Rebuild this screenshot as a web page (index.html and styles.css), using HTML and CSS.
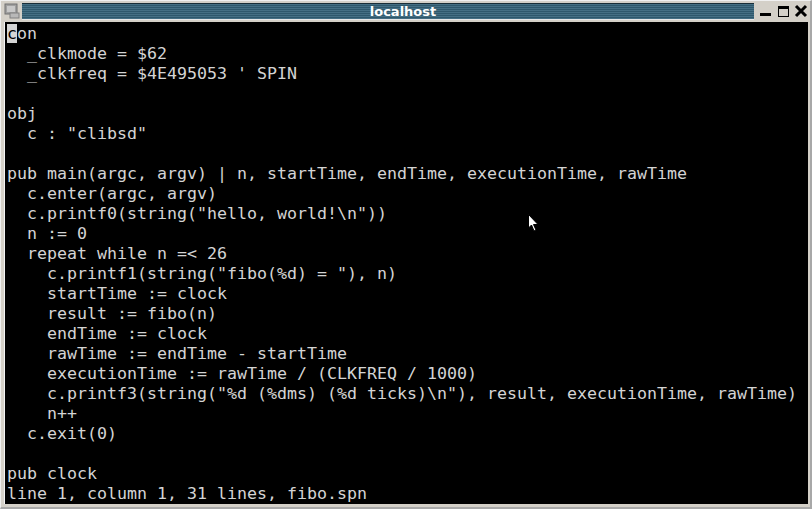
FILE: index.html
```html
<!DOCTYPE html>
<html>
<head>
<meta charset="utf-8">
<link rel="stylesheet" href="styles.css">
</head>
<body>
<div class="window">
  <div class="titlerow">
    <svg class="appicon" width="16" height="16" viewBox="0 0 16 16">
      <rect x="1" y="1" width="12" height="10" fill="#a0a0a0" stroke="#707070"/>
      <rect x="3" y="3" width="8" height="6" fill="#c8c8c8"/>
      <rect x="6" y="10" width="9" height="5" fill="#b8b8b8" stroke="#808080"/>
    </svg>
    <div class="titlebar"><span class="title">localhost</span></div>
    <div class="buttons">
      <svg width="14" height="14" viewBox="0 0 14 14"><rect x="2" y="9" width="11" height="3" fill="#000"/></svg>
      <svg width="14" height="14" viewBox="0 0 14 14"><rect x="2.5" y="2.5" width="10" height="10" fill="none" stroke="#000"/><rect x="2" y="2" width="11" height="3" fill="#000"/></svg>
      <svg width="14" height="14" viewBox="0 0 14 14"><path d="M2 2 L12 12 M12 2 L2 12" stroke="#000" stroke-width="3"/></svg>
    </div>
  </div>
  <div class="term">
<pre class="code"><span class="cursor">c</span>on
  _clkmode = $62
  _clkfreq = $4E495053 ' SPIN

obj
  c : "clibsd"

pub main(argc, argv) | n, startTime, endTime, executionTime, rawTime
  c.enter(argc, argv)
  c.printf0(string("hello, world!\n"))
  n := 0
  repeat while n =&lt; 26
    c.printf1(string("fibo(%d) = "), n)
    startTime := clock
    result := fibo(n)
    endTime := clock
    rawTime := endTime - startTime
    executionTime := rawTime / (CLKFREQ / 1000)
    c.printf3(string("%d (%dms) (%d ticks)\n"), result, executionTime, rawTime)
    n++
  c.exit(0)

pub clock
line 1, column 1, 31 lines, fibo.spn</pre>
    <svg class="pointer" width="12" height="19" viewBox="0 0 12 19">
      <path d="M0.5 0.5 L0.5 14 L3.5 11 L6 17 L8 16 L5.5 10.5 L10 10.5 Z" fill="#fff" stroke="#000" stroke-width="1"/>
    </svg>
  </div>
</div>
</body>
</html>
```

FILE: styles.css
```css
html, body {
  margin: 0;
  padding: 0;
}
body {
  width: 812px;
  height: 509px;
  background: #d4d0c8;
  overflow: hidden;
}
.window {
  width: 812px;
  height: 509px;
  box-sizing: border-box;
  border-left: 1px solid #f0f0f0;
  border-top: 1px solid #f0f0f0;
  border-right: 2px solid #a8a8a8;
  border-bottom: 2px solid #a8a8a8;
  display: flex;
  flex-direction: column;
  padding: 1px 2px 3px 3px;
}
.titlerow {
  height: 18px;
  display: flex;
  align-items: center;
}
.appicon {
  width: 16px;
  height: 16px;
  margin-right: 2px;
}
.titlebar {
  flex: 1;
  height: 17px;
  border-top: 1px solid #1a2e38;
  border-bottom: 1px solid #e8e8e8;
  box-sizing: border-box;
  background: repeating-linear-gradient(to bottom, #456f84 0px, #456f84 1px, #2f586c 1px, #2f586c 2px);
  display: flex;
  align-items: center;
  justify-content: center;
  padding-left: 30px;
}
.title {
  color: #ffffff;
  font-family: "DejaVu Sans", sans-serif;
  font-weight: bold;
  font-size: 13px;
  line-height: 15px;
}
.buttons {
  display: flex;
  gap: 4px;
  padding: 0 0 0 4px;
  align-items: center;
}
.buttons svg {
  display: block;
}
.term {
  flex: 1;
  margin-top: 2px;
  background: #000;
  border-left: 1px solid #f4f4f4;
  position: relative;
  overflow: hidden;
}
.code {
  margin: 0;
  padding: 2px 0 0 2px;
  font-family: "DejaVu Sans Mono", monospace;
  font-size: 16.61px;
  line-height: 20px;
  color: #d4d4d4;
  white-space: pre;
}
.cursor {
  background: #d4d4d4;
  color: #000;
}
.pointer {
  position: absolute;
  left: 523px;
  top: 192px;
}
```
